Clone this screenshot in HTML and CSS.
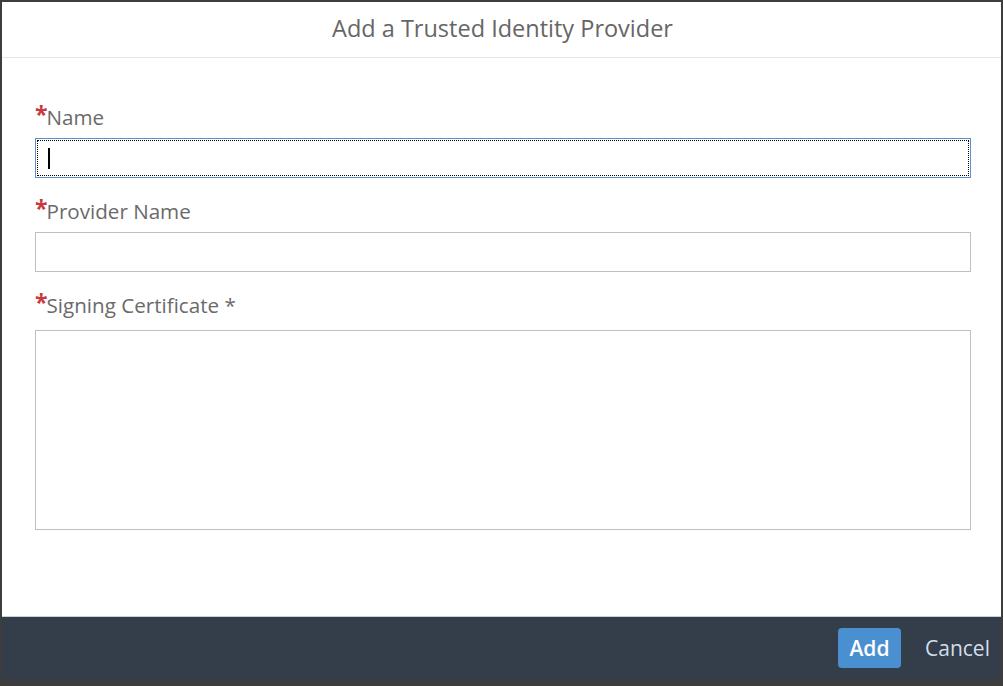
FILE: index.html
```html
<!DOCTYPE html>
<html>
<head>
<meta charset="utf-8">
<link rel="stylesheet" href="styles.css">
</head>
<body>
<div class="dialog">
  <header class="dlg-header">
    <h1 class="dlg-title">Add a Trusted Identity Provider</h1>
  </header>
  <main class="dlg-content">
    <div class="field">
      <label class="label"><span class="req">*</span>Name</label>
      <div class="input focused"><span class="caret"></span></div>
    </div>
    <div class="field">
      <label class="label"><span class="req">*</span>Provider Name</label>
      <div class="input"></div>
    </div>
    <div class="field">
      <label class="label"><span class="req">*</span>Signing Certificate *</label>
      <div class="textarea"></div>
    </div>
  </main>
  <footer class="dlg-footer">
    <button class="btn btn-primary">Add</button>
    <button class="btn btn-link">Cancel</button>
  </footer>
</div>
</body>
</html>
```
FILE: styles.css
```css
html, body {
  margin: 0;
  padding: 0;
  height: 100%;
}
body {
  background: #3d3d3d;
  font-family: "Open Sans", "Liberation Sans", Arial, sans-serif;
  overflow: hidden;
}
.dialog {
  margin: 2px 2px 0 2px;
  height: 677px;
  background: #fff;
  display: flex;
  flex-direction: column;
}
.dlg-header {
  height: 55px;
  border-bottom: 1px solid #e5e5e5;
  display: flex;
  align-items: center;
  justify-content: center;
  flex: none;
}
.dlg-title {
  margin: 0;
  font-weight: normal;
  font-size: 23.5px;
  line-height: 30px;
  color: #666;
  position: relative;
  top: -2px;
  left: 1px;
}
.dlg-content {
  flex: 1;
  padding: 47px 30px 0 33px;
  display: flex;
  flex-direction: column;
  gap: 21px;
}
.field {
  display: flex;
  flex-direction: column;
}
.label {
  font-size: 20.6px;
  line-height: 24px;
  height: 24px;
  color: #6a6a6a;
  display: block;
  white-space: nowrap;
}
.req {
  color: #c8383c;
  font-size: 23px;
  font-weight: bold;
  display: inline-block;
  line-height: 20px;
  vertical-align: top;
  position: relative;
  top: -1px;
  margin-left: 0;
  margin-right: -1px;
}
.input {
  height: 38px;
  border: 1px solid #bfbfbf;
  margin-top: 9px;
  position: relative;
}
.input.focused {
  border-color: #5b8fc8;
  outline: 1px dotted #000;
  outline-offset: -3px;
}
.caret {
  position: absolute;
  left: 12px;
  top: 9px;
  width: 2px;
  height: 21px;
  background: #000;
}
.textarea {
  height: 198px;
  border: 1px solid #bfbfbf;
  margin-top: 13px;
}
.dlg-footer {
  flex: none;
  height: 62px;
  border-top: 1px solid #c9d1dc;
  background: #343e4a;
  display: flex;
  align-items: center;
  justify-content: flex-end;
  padding-right: 10px;
  gap: 23px;
}
.btn {
  font-family: "Open Sans", "Liberation Sans", Arial, sans-serif;
  font-size: 21px;
  border: none;
  cursor: pointer;
  padding: 0;
}
.btn-primary {
  background: #4a8fd0;
  color: #fff;
  width: 63px;
  height: 40px;
  border-radius: 4px;
  font-weight: 600;
}
.btn-link {
  background: transparent;
  color: #d2dfeb;
  width: 67px;
}
```
